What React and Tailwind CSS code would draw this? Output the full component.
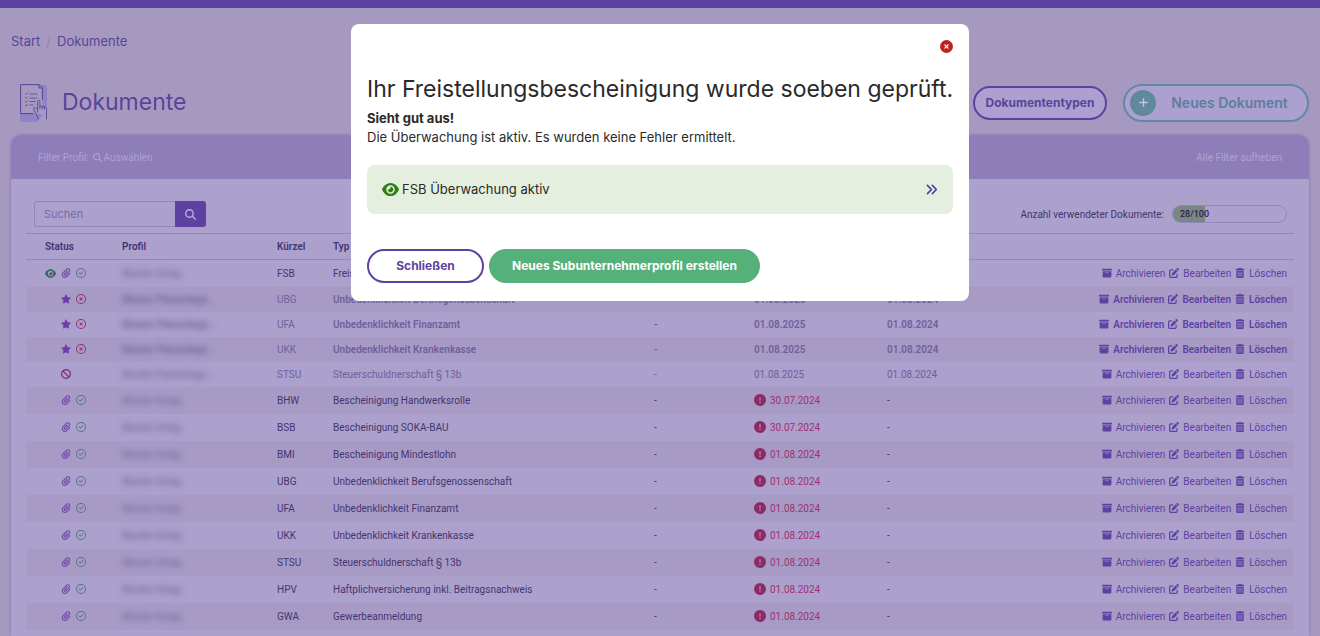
import React, { useState } from 'react';
import {
  FaAnglesRight,
  FaBan,
  FaBoxArchive,
  FaCircleExclamation,
  FaCircleXmark,
  FaEye,
  FaMagnifyingGlass,
  FaPaperclip,
  FaPenToSquare,
  FaPlus,
  FaRegCircleCheck,
  FaRegCircleXmark,
  FaStar,
  FaTrashCan,
} from 'react-icons/fa6';

const documents = [
  { id: 1, state: 'watched', code: 'FSB', type: 'Freistellungsbescheinigung', validUntil: '01.08.2025', created: '01.08.2024' },
  { id: 2, state: 'requested', code: 'UBG', type: 'Unbedenklichkeit Berufsgenossenschaft', validUntil: '01.08.2025', created: '01.08.2024' },
  { id: 3, state: 'requested', code: 'UFA', type: 'Unbedenklichkeit Finanzamt', validUntil: '01.08.2025', created: '01.08.2024' },
  { id: 4, state: 'requested', code: 'UKK', type: 'Unbedenklichkeit Krankenkasse', validUntil: '01.08.2025', created: '01.08.2024' },
  { id: 5, state: 'blocked', code: 'STSU', type: 'Steuerschuldnerschaft § 13b', validUntil: '01.08.2025', created: '01.08.2024' },
  { id: 6, state: 'ok', code: 'BHW', type: 'Bescheinigung Handwerksrolle', validUntil: '30.07.2024', expired: true },
  { id: 7, state: 'ok', code: 'BSB', type: 'Bescheinigung SOKA-BAU', validUntil: '30.07.2024', expired: true },
  { id: 8, state: 'ok', code: 'BMI', type: 'Bescheinigung Mindestlohn', validUntil: '01.08.2024', expired: true },
  { id: 9, state: 'ok', code: 'UBG', type: 'Unbedenklichkeit Berufsgenossenschaft', validUntil: '01.08.2024', expired: true },
  { id: 10, state: 'ok', code: 'UFA', type: 'Unbedenklichkeit Finanzamt', validUntil: '01.08.2024', expired: true },
  { id: 11, state: 'ok', code: 'UKK', type: 'Unbedenklichkeit Krankenkasse', validUntil: '01.08.2024', expired: true },
  { id: 12, state: 'ok', code: 'STSU', type: 'Steuerschuldnerschaft § 13b', validUntil: '01.08.2024', expired: true },
  { id: 13, state: 'ok', code: 'HPV', type: 'Haftplichversicherung inkl. Beitragsnachweis', validUntil: '01.08.2024', expired: true },
  { id: 14, state: 'ok', code: 'GWA', type: 'Gewerbeanmeldung', validUntil: '01.08.2024', expired: true },
];

const DocumentIcon = () => (
  <svg className="w-[27px] h-[39px]" viewBox="0 0 27 39" fill="none" aria-hidden="true">
    <path d="M5 2h19a3 3 0 0 1 3 3v22l-7 8-3 4H3a3 3 0 0 1-3-3v-6h5z" fill="#8c84c6" />
    <path d="M.6 1.5h18.6l3.3 3.4v26H.6z" fill="#a699c0" />
    <path d="M22.4 17V5l-3.2-3.4H.6v29h13" stroke="#5a4499" strokeWidth="1" />
    <path d="M19 1.6V5h3.4" stroke="#5a4499" strokeWidth="1" />
    <path d="M5 10.5l1 1 1.6-2M5 14.5l1 1 1.6-2M5 18.5l1 1 1.6-2M5 22l1 1 1.6-2" stroke="#5a4499" strokeWidth="0.8" />
    <path d="M9.5 11h8M9.5 15h8M9.5 18.5h6M9.5 22h4" stroke="#5a4499" strokeWidth="0.8" />
    <path
      d="M17.6 29V18.4c0-1.6 2.3-1.6 2.3 0V23l5 1.1c1.1.3 1.6 1 1.6 2.1V36M17.6 26.5l-2-1.6c-1.5-1-2.8.3-1.9 1.7l4.3 7.6V36M19.9 23v2.5M22.2 23.5v2.3M24.4 24v2.2"
      fill="#a699c0"
      stroke="#5a4499"
      strokeWidth="0.9"
      strokeLinecap="round"
      strokeLinejoin="round"
    />
  </svg>
);

const StatusIcons = ({ state }) => (
  <div className="flex items-center gap-[5px] text-[10px]">
    <span className="w-[11px]">{state === 'watched' && <FaEye className="size-[11px] text-[#33665b]" />}</span>
    <span className="w-[10px]">
      {(state === 'ok' || state === 'watched') && <FaPaperclip className="text-[#7447ab]" />}
      {state === 'requested' && <FaStar className="text-[#6a3fa8]" />}
      {state === 'blocked' && <FaBan className="text-[#7d2c73]" />}
    </span>
    <span className="w-[10px]">
      {(state === 'ok' || state === 'watched') && <FaRegCircleCheck className="text-[#557386]" />}
      {state === 'requested' && <FaRegCircleXmark className="text-[#943068]" />}
    </span>
  </div>
);

const RowAction = ({ icon: Icon, label }) => (
  <a href="#" className="flex items-center gap-1">
    <Icon className="size-[10px]" />
    {label}
  </a>
);

const DocumentRow = ({ doc }) => {
  const pending = !doc.expired && doc.state !== 'watched';
  const bold = doc.state === 'requested';

  return (
    <tr
      className={`even:bg-[#a79bc6] ${pending ? 'h-[25px] text-[#6f5f9c]' : 'h-[27px] text-[#45356f]'} ${
        bold ? 'font-semibold' : ''
      }`}
    >
      <td className="pl-[19px]">
        <StatusIcons state={doc.state} />
      </td>
      <td className="pl-1.5">
        <span className="blur-[3px] text-[#6a5c93]" aria-hidden="true">
          {pending ? 'Muster Fliesenlege...' : 'Muster Anlag'}
        </span>
      </td>
      <td className="pl-1.5 font-normal">{doc.code}</td>
      <td className="pl-1.5">{doc.type}</td>
      <td className="pl-1.5">-</td>
      <td className="pl-1.5">
        {doc.expired ? (
          <span className="flex items-center gap-1 text-[#a03070]">
            <FaCircleExclamation className="size-3 text-[#8d2a63]" />
            {doc.validUntil}
          </span>
        ) : (
          doc.validUntil
        )}
      </td>
      <td className="pl-1.5">{doc.created || '-'}</td>
      <td className="pr-[7px]">
        <div className="flex justify-end gap-1 text-[#5e42a3]">
          <RowAction icon={FaBoxArchive} label="Archivieren" />
          <RowAction icon={FaPenToSquare} label="Bearbeiten" />
          <RowAction icon={FaTrashCan} label="Löschen" />
        </div>
      </td>
    </tr>
  );
};

const DocumentTable = () => (
  <table className="w-full table-fixed text-left text-[10px] whitespace-nowrap">
    <thead>
      <tr className="h-[26px] border-t border-b border-[#9587bb] text-[#45356f]">
        <th className="w-[90px] pl-[19px] font-semibold">Status</th>
        <th className="w-[155px] pl-1.5 font-semibold">Profil</th>
        <th className="w-[56px] pl-1.5 font-semibold">Kürzel</th>
        <th className="w-[321px] pl-1.5 font-semibold">Typ</th>
        <th className="w-[100px] pl-1.5 font-semibold">Nummer</th>
        <th className="w-[133px] pl-1.5 font-semibold">Gültig bis</th>
        <th className="w-[100px] pl-1.5 font-semibold"></th>
        <th></th>
      </tr>
    </thead>
    <tbody>
      {documents.map((doc) => (
        <DocumentRow key={doc.id} doc={doc} />
      ))}
    </tbody>
  </table>
);

const ReviewDialog = ({ onClose }) => (
  <div className="fixed inset-0 flex items-start justify-center pt-6">
    <div role="dialog" aria-modal="true" aria-labelledby="dialog-title" className="w-full max-w-[618px] rounded-lg bg-white p-4 pb-[18px] text-[#2a2a2a]">
      <div className="flex justify-end">
        <button type="button" aria-label="Dialog schließen" onClick={onClose} className="text-[#bd2420]">
          <FaCircleXmark className="size-[13px]" />
        </button>
      </div>

      <h2 id="dialog-title" className="mt-5 text-[23px] leading-8 whitespace-nowrap">
        Ihr Freistellungsbescheinigung wurde soeben geprüft.
      </h2>
      <p className="mt-1 text-[13px] leading-[19px] font-bold">Sieht gut aus!</p>
      <p className="text-[13px] leading-[19px]">Die Überwachung ist aktiv. Es wurden keine Fehler ermittelt.</p>

      <a href="#" className="mt-[18px] flex h-[49px] items-center rounded-lg bg-[#e4efdf] px-[15px] text-[13px]">
        <FaEye className="mr-[3px] size-[17px] text-[#2f8013]" />
        FSB Überwachung aktiv
        <FaAnglesRight className="ml-auto size-[13px] text-[#53409a]" />
      </a>

      <div className="mt-[35px] flex gap-[5px] text-xs font-bold">
        <button type="button" onClick={onClose} className="h-[34px] w-[117px] rounded-full border-2 border-[#5e42a3] text-[#5e42a3]">
          Schließen
        </button>
        <button type="button" className="h-[34px] w-[271px] rounded-full bg-[#56b079] text-white">
          Neues Subunternehmerprofil erstellen
        </button>
      </div>
    </div>
  </div>
);

const App = () => {
  const [open, setOpen] = useState(true);
  const [search, setSearch] = useState('');

  return (
    <div className="flex h-screen flex-col overflow-hidden border-t-8 border-[#5e42a3] bg-[#a699c0] px-[11px] font-[Inter,sans-serif] text-[#5a4499]">
      {/* Breadcrumb */}
      <nav className="mt-[23px] flex gap-1.5 text-[13px] leading-5">
        <a href="#">Start</a>
        <span className="text-[#8f81b0]">/</span>
        <a href="#">Dokumente</a>
      </nav>

      {/* Page header */}
      <header className="mt-8 flex h-[39px] items-center pl-[9px]">
        <DocumentIcon />
        <h1 className="ml-[15px] text-[23px]">Dokumente</h1>
        <button type="button" className="ml-auto h-[34px] w-[134px] rounded-full border-2 border-[#5e42a3] bg-[#aca0d0] text-xs font-bold">
          Dokumententypen
        </button>
        <button
          type="button"
          className="ml-4 flex h-[38px] w-[186px] items-center rounded-full border-2 border-[#6289a2] bg-[#aca0d0] pr-1 pl-[5px] text-sm font-semibold text-[#5c7f9a]"
        >
          <span className="flex size-[26px] items-center justify-center rounded-full bg-[#5f8a9d] text-[#c9c0e6]">
            <FaPlus className="size-[11px]" />
          </span>
          <span className="flex-1">Neues Dokument</span>
        </button>
      </header>

      {/* Documents card */}
      <section className="mt-[13px] flex-1 rounded-t-[10px] bg-[#aca0cd] font-[Roboto,sans-serif] shadow-[0_0_3px_#7f70a5]">
        <div className="flex h-[44px] items-center justify-between rounded-t-[10px] bg-[#8d7db9] px-[27px] text-[10px] text-[#afa3d2]">
          <div className="flex items-center gap-1">
            Filter Profil:
            <button type="button" className="flex items-center gap-0.5">
              <FaMagnifyingGlass className="size-[9px]" />
              Auswählen
            </button>
          </div>
          <a href="#">Alle Filter aufheben</a>
        </div>

        <div className="px-[15px] pt-[22px]">
          <div className="mb-1.5 flex items-center justify-between px-2 pr-[7px]">
            <form className="flex h-[26px]" onSubmit={(e) => e.preventDefault()}>
              <input
                type="text"
                aria-label="Suchen"
                placeholder="Suchen"
                value={search}
                onChange={(e) => setSearch(e.target.value)}
                className="w-[141px] rounded-l-[3px] border border-r-0 border-[#9485bb] px-[9px] font-[Inter,sans-serif] text-[11px] outline-none placeholder:text-[#7a6ba6]"
              />
              <button type="submit" aria-label="Suche starten" className="flex w-[31px] items-center justify-center rounded-r-[3px] bg-[#5e42a3] text-[#b9aedb]">
                <FaMagnifyingGlass className="size-[11px]" />
              </button>
            </form>

            <div className="flex items-center gap-2 text-[10px] text-[#45356f]">
              Anzahl verwendeter Dokumente:
              <div
                role="progressbar"
                aria-label="Verwendete Dokumente"
                aria-valuenow={28}
                aria-valuemin={0}
                aria-valuemax={100}
                className="relative h-[18px] w-[115px] overflow-hidden rounded-full border border-[#9485bb]"
              >
                <div className="h-full bg-[#788781]" style={{ width: '28%' }} />
                <span className="absolute inset-0 pl-[7px] text-[9px] leading-4 font-medium text-[#30234f]">28/100</span>
              </div>
            </div>
          </div>

          <DocumentTable />
        </div>
      </section>

      {open && <ReviewDialog onClose={() => setOpen(false)} />}
    </div>
  );
};

export default App;
